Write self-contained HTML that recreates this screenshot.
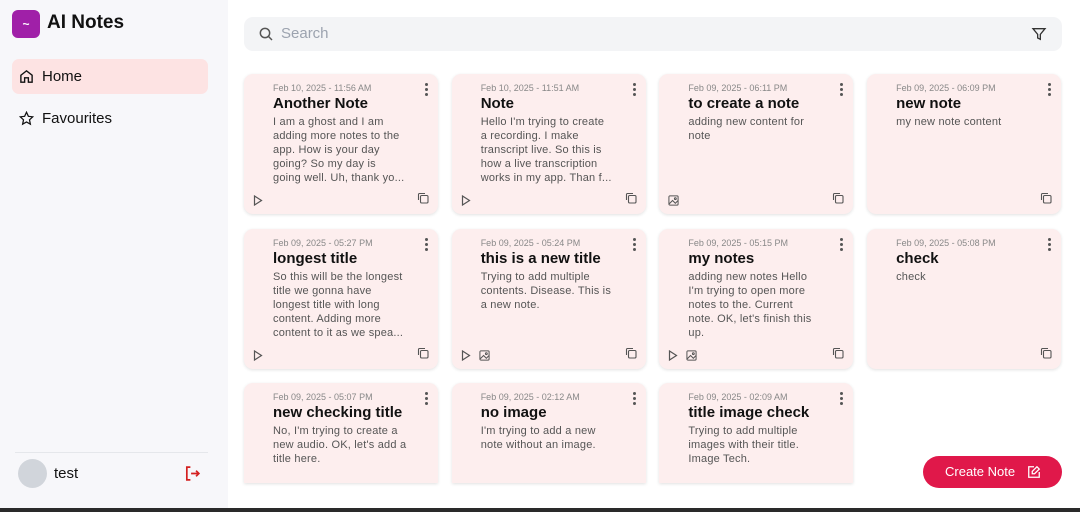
<!DOCTYPE html><html><head><style>
*{box-sizing:border-box;margin:0;padding:0}
body{width:1080px;height:512px;overflow:hidden;background:#fff;font-family:"Liberation Sans",sans-serif;position:relative;color:#111}
.side{position:absolute;left:0;top:0;width:228px;height:508px;background:#f7f7fa}
.logo{position:absolute;left:12px;top:10px;width:28px;height:28px;border-radius:6px;background:#a020a8;color:#fff;font-size:12px;text-align:center;line-height:28px;font-weight:bold}
.brand{position:absolute;left:47px;top:12px;font-size:19px;font-weight:bold}
.nav{position:absolute;left:12px;width:196px;height:35px;border-radius:7px;font-size:15px;line-height:35px;padding-left:30px}
.nav svg{position:absolute;left:7px;top:10px}
.bar{position:absolute;left:0;top:508px;width:1080px;height:4px;background:#2a2a2a}
.search{position:absolute;left:244px;top:17px;width:818px;height:34px;border-radius:9px;background:#f3f4f6}
.search span{position:absolute;left:37px;top:8px;font-size:15px;color:#9ca3af}
.card{position:absolute;width:194px;height:140px;background:#fdeeee;border-radius:9px;box-shadow:0 1px 3px rgba(0,0,0,.12);overflow:hidden}
.d{position:absolute;left:29px;top:9px;font-size:9px;color:#888}
.t{position:absolute;left:29px;top:21px;font-size:15px;font-weight:bold;color:#111}
.b{position:absolute;left:29px;top:41px;white-space:nowrap;font-size:11px;line-height:14px;color:#555;letter-spacing:.2px}
.k{position:absolute;right:10px;top:9px;width:3px}
.k i{display:block;width:3px;height:3px;border-radius:50%;background:#555;margin-bottom:2px}
.ic{position:absolute;top:119px}
.btn{position:absolute;left:923px;top:456px;width:139px;height:32px;border-radius:16px;background:#e0184a;color:#fff;font-size:13px;line-height:32px;padding-left:22px}
</style></head><body>
<div class="side">
<div class="logo">~</div><div class="brand">AI Notes</div>
<div class="nav" style="top:59px;background:#fde3e3"><svg width="15" height="15" viewBox="0 0 24 24" fill="none" stroke="#111" stroke-width="2.2"><path d="M3 10l9-7 9 7v11h-6v-7H9v7H3z"/></svg>Home</div>
<div class="nav" style="top:101px"><svg width="15" height="15" viewBox="0 0 24 24" fill="none" stroke="#111" stroke-width="2"><path d="M12 2l3 6.5 7 .8-5.2 4.8 1.4 7-6.2-3.6-6.2 3.6 1.4-7L2 9.3l7-.8z"/></svg>Favourites</div>
<div style="position:absolute;left:15px;top:452px;width:193px;border-top:1px solid #e5e7eb"></div>
<div style="position:absolute;left:18px;top:459px;width:29px;height:29px;border-radius:50%;background:#d1d5db"></div>
<div style="position:absolute;left:54px;top:465px;font-size:15px">test</div>
<svg style="position:absolute;left:184px;top:465px" width="17" height="17" viewBox="0 0 24 24" fill="none" stroke="#d42020" stroke-width="2.4"><path d="M9 3H4v18h5M10 12h11M17 8l4 4-4 4"/></svg>
</div>
<div class="search"><svg style="position:absolute;left:14px;top:9px" width="16" height="16" viewBox="0 0 24 24" fill="none" stroke="#555" stroke-width="2.2"><circle cx="10.5" cy="10.5" r="7"/><path d="M16 16l5 5"/></svg><span>Search</span>
<svg style="position:absolute;left:787px;top:9px" width="16" height="16" viewBox="0 0 24 24" fill="none" stroke="#333" stroke-width="2"><path d="M3 4h18l-7 8.5V20l-4-2v-5.5z"/></svg></div>
<div id="g"></div>
<div class="btn">Create Note <svg style="position:absolute;left:104px;top:9px" width="14" height="14" viewBox="0 0 24 24" fill="none" stroke="#fff" stroke-width="2.2"><path d="M12 3H3v18h18v-9M17 3l4 4-8 8H9v-4z"/></svg></div>
<div class="bar"></div>
<script>
var P='<svg width="10" height="11" viewBox="0 0 10 11" fill="none" stroke="#555" stroke-width="1.2"><path d="M1.5 1v9l7-4.5z"/></svg>';
var I='<svg width="11" height="11" viewBox="0 0 12 12" fill="none" stroke="#555" stroke-width="1.1"><rect x="1" y="1" width="10" height="10" rx="1"/><path d="M1 10l4-4 3 3 3-3"/><circle cx="8" cy="4" r="1"/></svg>';
var C='<svg width="12" height="12" viewBox="0 0 12 12" fill="none" stroke="#555" stroke-width="1.1"><rect x="3.5" y="3.5" width="7.5" height="7.5" rx="1.2"/><path d="M8 1.5H2.5a1 1 0 0 0-1 1V8"/></svg>';
var n=[
["Feb 10, 2025 - 11:56 AM","Another Note","I am a ghost and I am<br>adding more notes to the<br>app. How is your day<br>going? So my day is<br>going well. Uh, thank yo...",[P]],
["Feb 10, 2025 - 11:51 AM","Note","Hello I'm trying to create<br>a recording. I make<br>transcript live. So this is<br>how a live transcription<br>works in my app. Than f...",[P]],
["Feb 09, 2025 - 06:11 PM","to create a note","adding new content for<br>note",[I]],
["Feb 09, 2025 - 06:09 PM","new note","my new note content",[]],
["Feb 09, 2025 - 05:27 PM","longest title","So this will be the longest<br>title we gonna have<br>longest title with long<br>content. Adding more<br>content to it as we spea...",[P]],
["Feb 09, 2025 - 05:24 PM","this is a new title","Trying to add multiple<br>contents. Disease. This is<br>a new note.",[P,I]],
["Feb 09, 2025 - 05:15 PM","my notes","adding new notes Hello<br>I'm trying to open more<br>notes to the. Current<br>note. OK, let's finish this<br>up.",[P,I]],
["Feb 09, 2025 - 05:08 PM","check","check",[]],
["Feb 09, 2025 - 05:07 PM","new checking title","No, I'm trying to create a<br>new audio. OK, let's add a<br>title here.",null],
["Feb 09, 2025 - 02:12 AM","no image","I'm trying to add a new<br>note without an image.",null],
["Feb 09, 2025 - 02:09 AM","title image check","Trying to add multiple<br>images with their title.<br>Image Tech.",null]];
var h='';n.forEach(function(c,i){var x=244+(i%4)*207.7,y=74+Math.floor(i/4)*154.5;var hh=i>=8?483-y:140;
h+='<div class="card" style="left:'+x+'px;top:'+y+'px;height:'+hh+'px'+(i>=8?';border-radius:9px 9px 0 0':'')+'"><div class="d">'+c[0]+'</div><div class="t">'+c[1]+'</div><div class="b">'+c[2]+'</div><div class="k"><i></i><i></i><i></i></div>';
if(c[3]){c[3].forEach(function(s,j){h+='<div class="ic" style="left:'+(9+j*18)+'px">'+s+'</div>'});h+='<div class="ic" style="right:9px;top:117px">'+C+'</div>';}
h+='</div>';});
document.getElementById('g').innerHTML=h;
</script>
</body></html>
